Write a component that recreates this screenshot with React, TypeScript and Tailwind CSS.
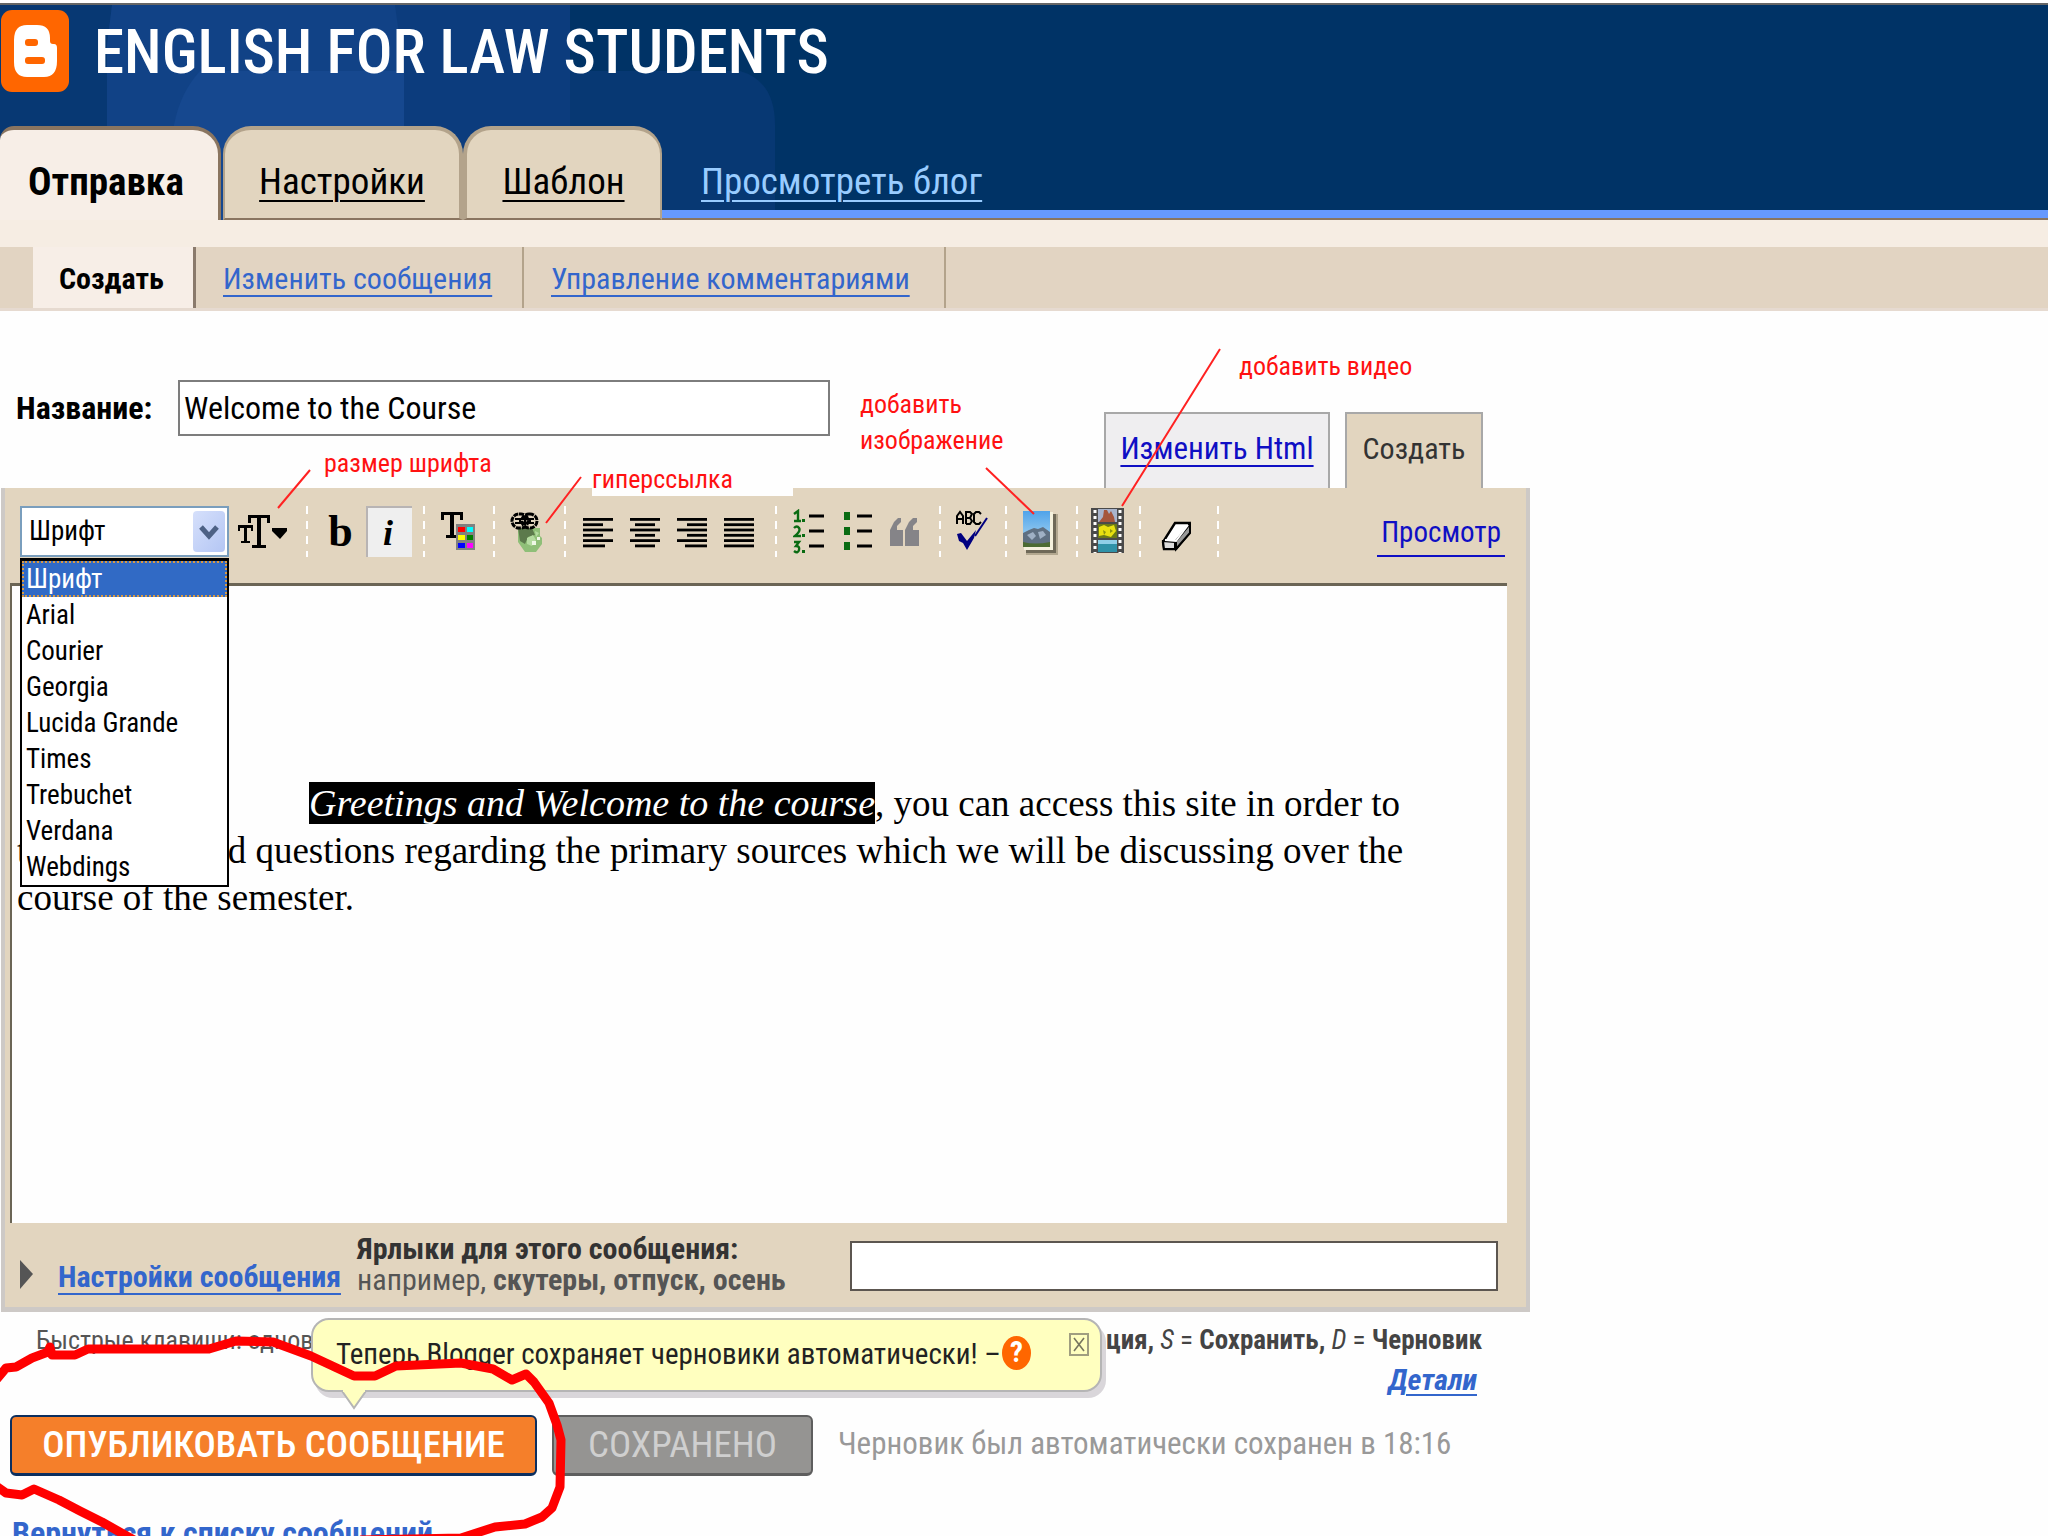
import type { ReactNode } from "react";

const fonts = ["Шрифт", "Arial", "Courier", "Georgia", "Lucida Grande", "Times", "Trebuchet", "Verdana", "Webdings"];

// x and width of every line in the alignment icons
const alignRows = {
  left: [[0, 30], [0, 20], [0, 30], [0, 20], [0, 30], [0, 22]],
  center: [[0, 30], [5, 20], [0, 30], [5, 20], [0, 30], [5, 20]],
  right: [[0, 30], [10, 20], [0, 30], [10, 20], [0, 30], [8, 22]],
  full: [[0, 30], [0, 30], [0, 30], [0, 30], [0, 30], [0, 30]],
};

function Separator() {
  return (
    <div className="h-[51px] w-[2px] shrink-0 bg-[repeating-linear-gradient(to_bottom,#fff_0px,#fff_8px,transparent_8px,transparent_15px)]" />
  );
}

function ToolButton({ label, className, children }: { label: string; className?: string; children: ReactNode }) {
  return (
    <button type="button" aria-label={label} className={className}>
      {children}
    </button>
  );
}

function AlignIcon({ kind }: { kind: keyof typeof alignRows }) {
  return (
    <svg width="30" height="30" viewBox="0 0 30 30">
      {alignRows[kind].map(([x, w], i) => (
        <rect key={i} x={x} y={i * 5.3} width={w} height="2.8" fill="#000" />
      ))}
    </svg>
  );
}

function BloggerLogo() {
  return (
    <svg width="70" height="84" viewBox="0 0 70 84" className="shrink-0">
      <rect x="1" y="1" width="68" height="82" rx="11" fill="#ff6600" />
      <path
        d="M27 16h10q13 0 13 13v3q0 3 3 3h1q3 0 3 4v13q0 16-13 16H27Q14 68 14 53V31q0-15 13-15Z"
        fill="#fff"
      />
      <rect x="25" y="30" width="13" height="7" rx="3" fill="#ff6600" />
      <rect x="25" y="48" width="20" height="7" rx="3" fill="#ff6600" />
    </svg>
  );
}

function Header() {
  return (
    <header className="relative border-t-[3px] border-white">
      <div className="relative h-[217px] overflow-hidden border-t-2 border-[#666] bg-[#003366]">
        <svg width="800" height="215" className="absolute left-0 top-0">
          <path d="M0 0H570V66H740Q775 76 775 120V215H0Z" fill="#073873" />
          <path d="M112 0H570V215H107V40Z" fill="#0c3c7d" />
          <path d="M112 0H395L404 66V215H107V40Z" fill="#114286" />
          <path d="M200 66H404V215H174V120Q180 88 200 66Z" fill="#16488f" />
        </svg>
        <div className="relative flex items-start gap-[24px] pt-1">
          <BloggerLogo />
          <h1 className="font-['Roboto_Condensed','Open_Sans',sans-serif] text-[61px] leading-[86px] font-medium whitespace-nowrap text-white">
            ENGLISH FOR LAW STUDENTS
          </h1>
        </div>
        <nav className="absolute inset-x-0 bottom-0 flex h-[94px] items-end text-[37px] leading-[44px]">
          <a href="#post" className="flex h-[94px] w-[221px] items-end rounded-tl-[14px] rounded-tr-[28px] border-t-4 border-r-[3px] border-[#8a7560] bg-[#f7eee7] pb-[16px] pl-[28px] text-[39px] font-bold">
            Отправка
          </a>
          <a href="#settings" className="ml-[2px] flex h-[94px] w-[240px] items-end justify-center rounded-t-[28px] border-t-4 border-r-4 border-b-2 border-l-2 border-[#b3a38b] border-b-[#8a7560] bg-[#e2d5bf] pb-[14px] underline decoration-2 underline-offset-[6px]">
            Настройки
          </a>
          <a href="#template" className="flex h-[94px] w-[199px] items-end justify-center rounded-t-[28px] border-t-4 border-r-2 border-b-2 border-l-4 border-[#b3a38b] border-b-[#8a7560] bg-[#e2d5bf] pb-[14px] underline decoration-2 underline-offset-[6px]">
            Шаблон
          </a>
          <div className="flex h-[94px] flex-1 items-end border-b-2 border-[#8a7560]">
            <div className="flex flex-1 border-b-8 border-[#6699ff] pb-[6px] pl-[39px]">
              <a href="#view" className="text-[#99ccff] underline decoration-2 underline-offset-[6px]">
                Просмотреть блог
              </a>
            </div>
          </div>
        </nav>
      </div>
      <div className="h-[27px] bg-[#f6ede3]" />
      <nav className="flex h-[64px] border-b-[3px] border-[#e6dad0] bg-[#e2d4c2] pl-[33px] text-[30px] leading-[64px] text-[#3366cc]">
        <a href="#create" className="w-[163px] border-r-[3px] border-[#8a7a6c] bg-[#f7eee7] pl-[26px] font-bold text-black">
          Создать
        </a>
        <a href="#edit" className="w-[328px] border-r-2 border-[#b3a38b] pl-[27px] underline decoration-2 underline-offset-[6px]">
          Изменить сообщения
        </a>
        <a href="#comments" className="w-[422px] border-r-2 border-[#b3a38b] pl-[27px] underline decoration-2 underline-offset-[6px]">
          Управление комментариями
        </a>
      </nav>
    </header>
  );
}

function FontMenu() {
  return (
    <div className="relative ml-[15px] w-[209px] shrink-0">
      <select
        aria-label="Шрифт"
        className="h-[51px] w-full appearance-none rounded-none border-2 border-[#7a9ebd] bg-white pl-[7px] text-[27px] text-black"
      >
        <option>Шрифт</option>
      </select>
      <span className="pointer-events-none absolute top-[5px] right-[4px] flex h-[41px] w-[32px] items-center justify-center rounded bg-gradient-to-br from-[#d6e0fb] to-[#b4c6f4]">
        <svg width="20" height="16" viewBox="0 0 20 16">
          <path d="M2 3l8 9 8-9" fill="none" stroke="#4d6185" strokeWidth="5" />
        </svg>
      </span>
      <ul
        role="listbox"
        aria-label="Шрифт"
        className="absolute top-[52px] left-0 z-10 w-full border-2 border-t-[3px] border-black bg-white text-[27px] leading-[36px]"
      >
        {fonts.map((font, i) => (
          <li
            key={font}
            role="option"
            aria-selected={i === 0}
            className={
              i === 0
                ? "bg-[#316ac5] pl-1 text-white outline-2 -outline-offset-2 outline-dotted outline-[#d89a45]"
                : "pl-1"
            }
          >
            {font}
          </li>
        ))}
      </ul>
    </div>
  );
}

function Toolbar() {
  return (
    <div className="flex h-[95px] items-start pt-[18px]">
      <FontMenu />
      <ToolButton label="Размер шрифта" className="flex h-[51px] w-[77px] items-center pl-[9px]">
        <svg width="52" height="36" viewBox="0 0 52 36">
          <path d="M0 11h15v6h-2v-3H9v13h3v2H3v-2h3V14H2v3H0Z" />
          <path d="M10 1h22v8h-3V4h-6v27h5v3H14v-3h5V4h-6v5h-3Z" />
          <path d="M34 14h15v3l-7 8-8-8Z" />
        </svg>
      </ToolButton>
      <Separator />
      <ToolButton label="Полужирный" className="h-[51px] w-[58px] pl-[7px] font-['Liberation_Serif',serif] text-[44px] leading-[46px] font-bold">
        b
      </ToolButton>
      <ToolButton label="Курсив" className="mr-[11px] h-[51px] w-[46px] border-t-2 border-l-2 border-[#b8b4b4] bg-[#efefef] pr-1 font-['Liberation_Serif',serif] text-[36px] leading-[44px] font-bold italic">
        i
      </ToolButton>
      <Separator />
      <ToolButton label="Цвет текста" className="flex h-[51px] w-[68px] pt-[5px] pl-[15px]">
        <svg width="36" height="42" viewBox="0 0 36 42">
          <path d="M1 1h22v8h-3V4h-6v20h4v3H6v-3h4V4H4v5H1Z" />
          <rect x="16" y="13" width="19" height="26" fill="#808080" />
          <rect x="18" y="16" width="7" height="5" fill="#f00" />
          <rect x="27" y="16" width="6" height="5" fill="#0ff" />
          <rect x="18" y="24" width="7" height="5" fill="#ff0" />
          <rect x="27" y="24" width="6" height="5" fill="#008000" />
          <rect x="18" y="32" width="7" height="5" fill="#00f" />
          <rect x="27" y="32" width="6" height="5" fill="#f0f" />
        </svg>
      </ToolButton>
      <Separator />
      <ToolButton label="Ссылка" className="flex h-[51px] w-[69px] pt-[6px] pl-[15px]">
        <svg width="34" height="42" viewBox="0 0 34 42">
          <path d="M8 16h22v8l2 2v6l-6 8H15l-7-10Z" fill="#8fbf78" />
          <path d="M8 16h14l3 7-7 2-3 7-5-3Z" fill="#5c7a4c" />
          <path d="M17 26l6-3 3 5-4 6-5-2ZM25 19l4 2-3 4Z" fill="#b4dba0" />
          <path d="M22 29h4v4h-4ZM27 25h3v3h-3Z" fill="#eef8e6" />
          <rect x="2" y="2" width="16" height="14" rx="7" fill="#e2d5bf" stroke="#000" strokeWidth="3" strokeDasharray="5 1" />
          <rect x="12" y="2" width="15" height="14" rx="7" fill="none" stroke="#000" strokeWidth="3" strokeDasharray="5 1" />
          <path d="M5 7h19M5 11h19M10 6v6M15 5v8M20 6v6" stroke="#000" strokeWidth="2" />
        </svg>
      </ToolButton>
      <Separator />
      <div className="flex h-[51px] w-[209px] items-center gap-[17px] pt-[2px] pl-[17px]">
        <ToolButton label="По левому краю"><AlignIcon kind="left" /></ToolButton>
        <ToolButton label="По центру"><AlignIcon kind="center" /></ToolButton>
        <ToolButton label="По правому краю"><AlignIcon kind="right" /></ToolButton>
        <ToolButton label="По ширине"><AlignIcon kind="full" /></ToolButton>
      </div>
      <Separator />
      <div className="flex h-[51px] w-[162px] items-center gap-[18px] pl-[16px]">
        <ToolButton label="Нумерованный список">
          <svg width="32" height="46" viewBox="0 0 32 46">
            <path d="M1 5l4-3v11M1 12h7" fill="none" stroke="#0a6b12" strokeWidth="2.4" />
            <path d="M1 19q3-3 5 0t-4 8h6" fill="none" stroke="#0a6b12" strokeWidth="2.4" />
            <path d="M1 33h5l-3 4q4 0 3 4t-5 1" fill="none" stroke="#0a6b12" strokeWidth="2.4" />
            <path d="M9 10h3v3H9ZM9 25h3v3H9ZM9 41h3v3H9Z" fill="#0a6b12" />
            <path d="M16 7h15M16 22h15M16 37h15" stroke="#000" strokeWidth="3" />
          </svg>
        </ToolButton>
        <ToolButton label="Маркированный список">
          <svg width="29" height="46" viewBox="0 0 29 46">
            <path d="M1 3h6v8H1ZM1 18h6v8H1ZM1 33h6v8H1Z" fill="#0a6b12" />
            <path d="M14 7h15M14 22h15M14 37h15" stroke="#000" strokeWidth="3" />
          </svg>
        </ToolButton>
        <ToolButton label="Цитата">
          <svg width="30" height="30" viewBox="0 0 30 30">
            <path d="M11 1v4L7 9v4h6v16H0V13L4 5 8 1ZM27 1v4l-4 4v4h6v16H15V13l4-8 4-4Z" fill="#858488" />
          </svg>
        </ToolButton>
      </div>
      <Separator />
      <ToolButton label="Проверка правописания" className="flex h-[51px] w-[64px] pt-[4px] pl-[15px]">
        <svg width="32" height="40" viewBox="0 0 32 40">
          <path
            d="M1 14V6l3-4 3 4v8M1 9h6M10 14V2h4l2 2-2 4h-4M14 8l2 3-2 3h-4M25 4l-2-2h-3l-2 2v8l2 2h3l2-2"
            fill="none"
            stroke="#000"
            strokeWidth="2"
          />
          <path d="M31 8L19 26" stroke="#000080" strokeWidth="2" />
          <path d="M1 24l4-1 6 8 9-11-2 8-7 12-4-7-4-2Z" fill="#000080" />
        </svg>
      </ToolButton>
      <Separator />
      <ToolButton label="Добавить изображение" className="flex h-[51px] w-[69px] pt-[4px] pl-[15px]">
        <svg width="38" height="46" viewBox="0 0 38 46">
          <defs>
            <linearGradient id="sky" x1="0" y1="0" x2="0" y2="1">
              <stop offset="0" stopColor="#4fa3ea" />
              <stop offset="1" stopColor="#b4dcf2" />
            </linearGradient>
          </defs>
          <rect x="4" y="4" width="32" height="41" fill="#b3a890" />
          <rect x="4" y="4" width="30" height="39" fill="#6f6958" />
          <rect x="2" y="2" width="29" height="38" fill="#f5f1dd" />
          <rect x="1" y="1" width="27" height="36" fill="url(#sky)" />
          <path d="M1 23l6-3 5-2 4 1 5-2 7 5v15H1Z" fill="#5f7082" />
          <path d="M5 25l6-3 3 4-4 4ZM16 22l5-1 3 4-6 4Z" fill="#9fb0c4" />
          <path d="M1 32q12 3 27 0v5H1Z" fill="#4c6b32" />
        </svg>
      </ToolButton>
      <Separator />
      <ToolButton label="Добавить видео" className="flex h-[51px] w-[61px] pt-[2px] pl-[13px]">
        <svg width="34" height="46" viewBox="0 0 34 46">
          <rect width="33" height="45" fill="#4a4a4a" />
          <rect x="7" y="1" width="19" height="13" fill="#a9b4cc" />
          <path d="M8 14l4-5 1-7h3l2 4 2-3 3 6 1 5Z" fill="#a5563c" />
          <rect x="7" y="16" width="19" height="14" fill="#6b7a18" />
          <path d="M8 19l5-2 4 2 6-2 2 6-5 6-7-2-5 1Z" fill="#e8e010" />
          <path d="M12 22l3 2-2 3ZM19 21l3 2-3 2Z" fill="#8b9310" />
          <rect x="7" y="32" width="19" height="12" fill="#2f92a8" />
          <rect x="7" y="32" width="19" height="4" fill="#8fcfe8" />
          <path d="M4 2v43M29 2v43" stroke="#fff" strokeWidth="3" strokeDasharray="3 3" />
        </svg>
      </ToolButton>
      <Separator />
      <ToolButton label="Удалить форматирование" className="flex h-[51px] w-[76px] pt-[15px] pl-[20px]">
        <svg width="32" height="31" viewBox="0 0 32 31">
          <path d="M14 2h14v10L15 28H3l-1-7Z" fill="#fff" stroke="#000" strokeWidth="2.4" />
          <path d="M2 20l12 1v7H3Z" fill="#ddd" stroke="#000" strokeWidth="2" />
          <path d="M15 20L29 3v9L15 28Z" fill="#999" stroke="#000" strokeWidth="2" />
          <path d="M4 19l11 1L27 4" fill="none" stroke="#fff" strokeWidth="2" />
        </svg>
      </ToolButton>
      <Separator />
      <a href="#preview" className="mr-[21px] ml-auto h-[51px] border-b-2 border-[#0f0fc4] px-[4px] text-[29px] leading-[52px] text-[#0f0fc4]">
        Просмотр
      </a>
    </div>
  );
}

function Editor() {
  return (
    <section className="ml-px w-[1529px] border-r-4 border-b-[5px] border-l-4 border-[#cdc9c6] bg-[#e2d5bf]">
      <Toolbar />
      <div
        contentEditable
        suppressContentEditableWarning
        className="mr-[19px] ml-[5px] h-[640px] border-t-[3px] border-l-2 border-[#6b6555] bg-[#fefefe] pt-[194px] pl-[5px] indent-[292px] font-['Liberation_Serif',serif] text-[37px] leading-[47px] whitespace-nowrap text-black outline-none"
      >
        <i className="bg-black text-[38px] text-white">Greetings and Welcome to the course</i>, you can access this site in order to
        <br />
        texts, notes and questions regarding the primary sources which we will be discussing over the
        <br />
        course of the semester.
      </div>
      <div className="flex h-[84px] pr-[28px] text-[#333]">
        <svg width="14" height="30" viewBox="0 0 14 30" className="mt-[37px] ml-[15px]">
          <path d="M0 0l13 14L0 29Z" fill="#555" />
        </svg>
        <a href="#options" className="mt-[36px] ml-[24px] w-[299px] text-[30px] leading-[36px] font-bold whitespace-nowrap text-[#3366cc] underline decoration-2 underline-offset-[6px]">
          Настройки сообщения
        </a>
        <label htmlFor="tags" className="pt-[10px] text-[30px] leading-[31px] whitespace-nowrap">
          <b>Ярлыки для этого сообщения:</b>
          <br />
          <span className="text-[#555]">
            например, <b>скутеры, отпуск, осень</b>
          </span>
        </label>
        <input id="tags" className="mt-[18px] ml-auto h-[50px] w-[648px] border-2 border-[#5c5650] bg-white px-2 text-[29px]" />
      </div>
    </section>
  );
}

function AutosaveTip() {
  return (
    <div className="absolute top-[6px] left-[311px] flex h-[74px] w-[791px] items-start rounded-[18px] border-2 border-[#b5b5b5] bg-[#ffffbf] shadow-[4px_6px_0_#d9d6da]">
      <p className="mt-[16px] ml-[23px] text-[29px] leading-[36px] whitespace-nowrap text-[#222]">
        Теперь Blogger сохраняет черновики автоматически! –
      </p>
      <a href="#help" aria-label="Справка" className="absolute top-[16px] left-[689px] flex h-[34px] w-[29px] items-center justify-center rounded-[50%] bg-[#ff6600] text-[29px] font-bold text-white">
        ?
      </a>
      <button type="button" aria-label="Закрыть" className="absolute top-[13px] left-[756px] flex h-[23px] w-[20px] items-center justify-center border-2 border-[#a09e80]">
        <svg width="12" height="15" viewBox="0 0 12 15">
          <path d="M1 1l10 13M11 1L1 14" stroke="#77765f" strokeWidth="1.6" />
        </svg>
      </button>
      <svg width="28" height="20" viewBox="0 0 28 20" className="absolute top-[70px] left-[27px]">
        <path d="M2 1l12 17L26 1" fill="#ffffbf" stroke="#b5b5b5" strokeWidth="2" />
        <path d="M3 0h22v2H3Z" fill="#ffffbf" />
      </svg>
    </div>
  );
}

function Footer() {
  return (
    <footer className="relative w-[1530px]">
      <div className="flex h-[103px] justify-between pt-[10px] pr-[48px] pl-[36px] text-[27px] leading-[36px] text-[#555]">
        <p className="text-[26px]">Быстрые клавиши: одновременно</p>
        <div className="text-right">
          <p className="text-[#444]">
            <b>Публикация,</b> <i>S</i> = <b>Сохранить,</b> <i>D</i> = <b>Черновик</b>
          </p>
          <a href="#details" className="mr-[5px] text-[30px] leading-[44px] font-bold text-[#3366cc] italic underline decoration-2 underline-offset-4">
            Детали
          </a>
        </div>
      </div>
      <AutosaveTip />
      <div className="flex items-center pl-[10px] text-[37px]">
        <button type="button" className="h-[61px] w-[527px] rounded-md border-t-2 border-r-2 border-b-[3px] border-l-2 border-[#0c2f5f] bg-[#f57f2a] font-medium whitespace-nowrap text-white">
          ОПУБЛИКОВАТЬ СООБЩЕНИЕ
        </button>
        <button type="button" disabled className="ml-[15px] h-[61px] w-[261px] rounded-md border-t-2 border-r-2 border-b-[3px] border-l-2 border-[#5e5e5e] bg-[#959492] whitespace-nowrap text-[#cfcfcf]">
          СОХРАНЕНО
        </button>
        <p className="ml-[25px] pb-1 text-[31px] leading-[44px] whitespace-nowrap text-[#999]">
          Черновик был автоматически сохранен в 18:16
        </p>
      </div>
      <a href="#list" className="ml-[12px] block pt-[36px] text-[32px] leading-[42px] font-bold whitespace-nowrap text-[#3366cc] underline decoration-2">
        Вернуться к списку сообщений
      </a>
    </footer>
  );
}

function Notes() {
  return (
    <div className="pointer-events-none absolute inset-0 z-20 text-[26px] leading-[36px] text-[#f11]">
      <span className="absolute top-[445px] left-[324px] whitespace-nowrap">размер шрифта</span>
      <span className="absolute top-[462px] left-[592px] h-[34px] w-[201px] bg-[#fefefe] leading-[34px] whitespace-nowrap">гиперссылка</span>
      <span className="absolute top-[386px] left-[860px] w-[160px]">добавить изображение</span>
      <span className="absolute top-[348px] left-[1239px] whitespace-nowrap">добавить видео</span>
      <svg width="1530" height="1536" className="absolute top-0 left-0">
        <g fill="none" stroke="#f22" strokeWidth="2">
          <path d="M310 470L278 508M581 477L546 523M986 468L1034 514M1220 349L1122 506" />
        </g>
        <path
          d="M-4 1380L6 1368 16 1367 32 1358 48 1352 50 1347 52 1355 75 1355 88 1349 209 1349 236 1341 273 1342 311 1356 354 1376 375 1376 396 1366 461 1363 493 1369 512 1380 526 1374 534 1382 549 1403 557 1425 561 1440 560 1487 552 1508 542 1517 525 1524 495 1527 461 1538 360 1540M-4 1486L6 1493 22 1495 34 1489 59 1500 80 1511 102 1522 134 1540"
          fill="none"
          stroke="#f00"
          strokeWidth="9"
          strokeLinejoin="round"
        />
      </svg>
    </div>
  );
}

export default function App() {
  return (
    <div className="relative h-screen overflow-hidden bg-[#fefefe] font-['Roboto_Condensed','Liberation_Sans',sans-serif] text-black">
      <Header />
      <main>
        <div className="flex h-[177px] w-[1483px] items-end">
          <div className="mb-[52px] flex items-center pl-[16px]">
            <label htmlFor="title" className="w-[162px] text-[32px] font-bold">
              Название:
            </label>
            <input
              id="title"
              defaultValue="Welcome to the Course"
              className="h-[56px] w-[652px] border-2 border-[#7d7d7d] bg-white px-1 text-[32px]"
            />
          </div>
          <a href="#html" className="ml-auto h-[76px] w-[226px] border-2 border-b-0 border-[#a8a8a8] bg-[#efeef0] text-center text-[31px] leading-[70px] text-[#0f0fc4] underline decoration-2 underline-offset-[6px]">
            Изменить Html
          </a>
          <a href="#compose" className="ml-[15px] h-[76px] w-[138px] border-2 border-b-0 border-[#a8a8a8] bg-[#e2d5bf] text-center text-[30px] leading-[70px] text-[#333]">
            Создать
          </a>
        </div>
        <Editor />
        <Footer />
      </main>
      <Notes />
    </div>
  );
}
